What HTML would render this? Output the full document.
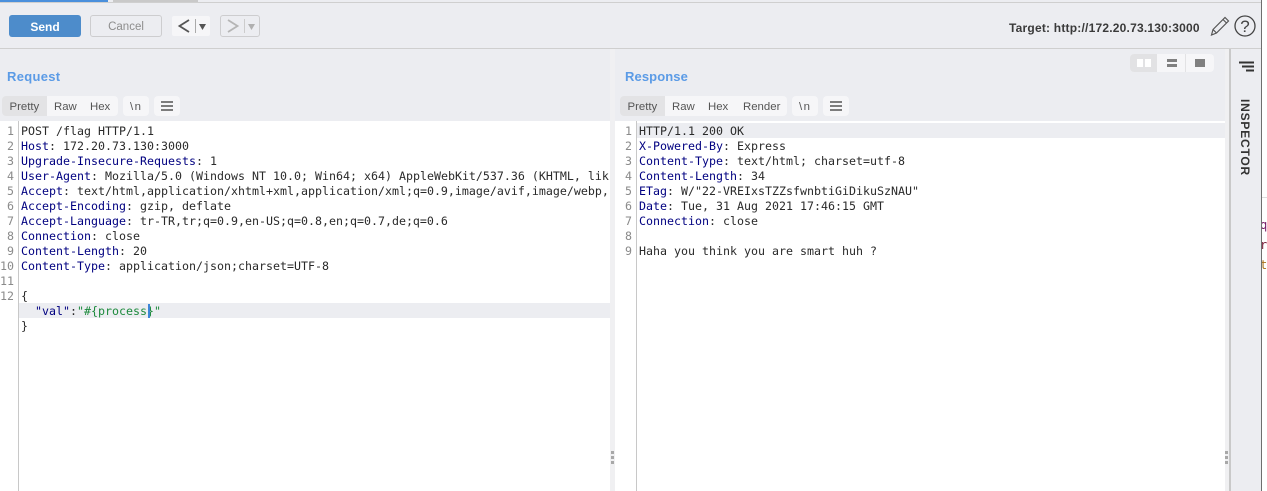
<!DOCTYPE html>
<html><head><meta charset="utf-8"><style>
html,body{margin:0;padding:0;width:1267px;height:491px;overflow:hidden;background:#fff}
*{box-sizing:border-box}
.a{position:absolute}
body{font-family:"Liberation Sans",sans-serif;color:#444}
.ln{position:absolute;font:11.63px/15px "DejaVu Sans Mono","Liberation Mono",monospace;color:#2a2a2a;white-space:pre;height:15px}
.n{position:absolute;font:11.63px/15px "DejaVu Sans Mono","Liberation Mono",monospace;color:#8a8a8a;text-align:right;height:15px}
b{font-weight:normal;color:#000080}
.t{position:absolute;font-size:11.4px;line-height:20px;color:#555;top:97px;white-space:nowrap}
.g{position:absolute;background:#f6f6f8;border-radius:4px;top:96px;height:20px}
</style></head><body>
<div class="a" style="left:0;top:0;width:1261px;height:491px;background:#ecedf1"></div>
<div class="a" style="left:0;top:2px;width:1261px;height:1px;background:#cfcfcf"></div>
<div class="a" style="left:0;top:0;width:108px;height:2px;background:#4a8fdc"></div>
<div class="a" style="left:113px;top:0;width:85px;height:2px;background:#c9c9c9"></div>
<div class="a" style="left:0;top:48px;width:1261px;height:1px;background:#cfcfcf"></div>
<div class="a" style="left:1261px;top:0;width:1px;height:491px;background:#6e6e6e"></div>
<div class="a" style="left:1262px;top:197px;width:5px;height:1px;background:#ddd"></div>

<div class="a" style="left:9px;top:15px;width:72px;height:22px;background:#4d8ccb;border-radius:3px;color:#fff;font-weight:bold;font-size:12px;line-height:24px;text-align:center">Send</div>
<div class="a" style="left:90px;top:15px;width:72px;height:22px;border:1px solid #cdcdcf;border-radius:3px;color:#8d8d8d;font-size:11.5px;line-height:23px;text-align:center">Cancel</div>
<div class="a" style="left:172px;top:16px;width:38px;height:20px;background:#f6f6f8;border-radius:2px"></div>
<svg class="a" style="left:172px;top:16px" width="38" height="20"><path d="M17 4 7.500 10 17 16" fill="none" stroke="#555" stroke-width="1.800"/><path d="M23.500 3v14" stroke="#aaa"/><path d="M27 8h7l-3.500 6z" fill="#555"/></svg>
<div class="a" style="left:220px;top:15px;width:40px;height:22px;border:1px solid #cdcdcf;border-radius:3px"></div>
<svg class="a" style="left:220px;top:16px" width="40" height="20"><path d="M8 4 17.500 10 8 16" fill="none" stroke="#b5b5b5" stroke-width="1.800"/><path d="M24.500 3v14" stroke="#ccc"/><path d="M28 8h7l-3.500 6z" fill="#b0b0b0"/></svg>
<div class="a" style="left:1009px;top:19px;font-size:12px;font-weight:bold;line-height:18px;letter-spacing:.21px;color:#3a3a3a;white-space:nowrap">Target: http://172.20.73.130:3000</div>
<svg class="a" style="left:1208px;top:14px" width="52" height="24"><path d="M3.500 21 5 15.500 17 3.500l3.500 3.500L8.500 19z M5 15.500 8.500 19 M15 5.500 18.500 9" fill="none" stroke="#555" stroke-width="1.200"/><circle cx="37" cy="12" r="10" fill="none" stroke="#444" stroke-width="1.300"/><text x="37" y="18" font-size="17" text-anchor="middle" fill="#444" font-family="Liberation Sans">?</text></svg>

<div class="a" style="left:7px;top:68px;font-size:13px;font-weight:bold;line-height:17px;letter-spacing:.3px;color:#5b9be6">Request</div>
<div class="a" style="left:625px;top:68px;font-size:13px;font-weight:bold;line-height:17px;letter-spacing:.1px;color:#5b9be6">Response</div>

<div class="g" style="left:2px;width:116px"></div>
<div class="a" style="left:2px;top:96px;width:45px;height:20px;background:#e3e3e5;border-radius:4px 0 0 4px"></div>
<div class="t" style="left:9.500px">Pretty</div><div class="t" style="left:54px">Raw</div><div class="t" style="left:90px">Hex</div>
<div class="g" style="left:123px;width:26px"></div><div class="t" style="left:130px;letter-spacing:1.500px">\n</div>
<div class="g" style="left:154px;width:26px"></div>
<svg class="a" style="left:154px;top:96px" width="26" height="20"><path d="M7 6h12M7 10h12M7 14h12" stroke="#333" stroke-width="1.300"/></svg>

<div class="g" style="left:620px;width:167px"></div>
<div class="a" style="left:620px;top:96px;width:45px;height:20px;background:#e3e3e5;border-radius:4px 0 0 4px"></div>
<div class="t" style="left:627.500px">Pretty</div><div class="t" style="left:672px">Raw</div><div class="t" style="left:708px">Hex</div><div class="t" style="left:743px">Render</div>
<div class="g" style="left:792px;width:26px"></div><div class="t" style="left:799px;letter-spacing:1.500px">\n</div>
<div class="g" style="left:823px;width:26px"></div>
<svg class="a" style="left:823px;top:96px" width="26" height="20"><path d="M7 6h12M7 10h12M7 14h12" stroke="#333" stroke-width="1.300"/></svg>

<div class="a" style="left:1130px;top:54px;width:84px;height:18px;background:#f6f6f8;border-radius:4px"></div>
<div class="a" style="left:1130px;top:54px;width:27px;height:18px;background:#e2e2e4;border-radius:4px 0 0 4px"></div>
<div class="a" style="left:1137px;top:59px;width:6px;height:8px;background:#fff"></div>
<div class="a" style="left:1145px;top:59px;width:6px;height:8px;background:#fff"></div>
<div class="a" style="left:1185px;top:54px;width:1px;height:18px;background:#e2e2e4"></div>
<div class="a" style="left:1167px;top:59px;width:10px;height:3px;background:#808080"></div>
<div class="a" style="left:1167px;top:64px;width:10px;height:3px;background:#808080"></div>
<div class="a" style="left:1195px;top:59px;width:10px;height:8px;background:#808080"></div>

<div class="a" style="left:0;top:121px;width:610px;height:370px;background:#fff"></div>
<div class="a" style="left:18px;top:121px;width:1px;height:370px;background:#c8c8c8"></div>
<div class="a" style="left:19px;top:303px;width:591px;height:15px;background:#ecedf1"></div>
<div class="a" style="left:610px;top:49px;width:5px;height:442px;background:#f0f0f2"></div>
<div class="a" style="left:615px;top:121px;width:610px;height:370px;background:#fff"></div>
<div class="a" style="left:636px;top:121px;width:1px;height:370px;background:#c8c8c8"></div>
<div class="a" style="left:637px;top:123px;width:588px;height:15px;background:#ecedf1"></div>
<div class="a" style="left:1225px;top:49px;width:4px;height:442px;background:#f0f0f2"></div>
<div class="a" style="left:1229px;top:49px;width:2px;height:442px;background:#c9c9c9"></div>

<div class="a" style="left:0;top:124px;width:14px;height:195px">
<div class="n" style="top:0;right:0">1</div><div class="n" style="top:15px;right:0">2</div><div class="n" style="top:30px;right:0">3</div><div class="n" style="top:45px;right:0">4</div><div class="n" style="top:60px;right:0">5</div><div class="n" style="top:75px;right:0">6</div><div class="n" style="top:90px;right:0">7</div><div class="n" style="top:105px;right:0">8</div><div class="n" style="top:120px;right:0">9</div><div class="n" style="top:135px;right:0">10</div><div class="n" style="top:150px;right:0">11</div><div class="n" style="top:165px;right:0">12</div>
</div>
<div class="a" style="left:21px;top:124px;width:588px;height:240px;overflow:hidden">
<div class="ln" style="top:0">POST /flag HTTP/1.1</div>
<div class="ln" style="top:15px"><b>Host</b>: 172.20.73.130:3000</div>
<div class="ln" style="top:30px"><b>Upgrade-Insecure-Requests</b>: 1</div>
<div class="ln" style="top:45px"><b>User-Agent</b>: Mozilla/5.0 (Windows NT 10.0; Win64; x64) AppleWebKit/537.36 (KHTML, like Gecko)</div>
<div class="ln" style="top:60px"><b>Accept</b>: text/html,application/xhtml+xml,application/xml;q=0.9,image/avif,image/webp,image/apng</div>
<div class="ln" style="top:75px"><b>Accept-Encoding</b>: gzip, deflate</div>
<div class="ln" style="top:90px"><b>Accept-Language</b>: tr-TR,tr;q=0.9,en-US;q=0.8,en;q=0.7,de;q=0.6</div>
<div class="ln" style="top:105px"><b>Connection</b>: close</div>
<div class="ln" style="top:120px"><b>Content-Length</b>: 20</div>
<div class="ln" style="top:135px"><b>Content-Type</b>: application/json;charset=UTF-8</div>
<div class="ln" style="top:165px">{</div>
<div class="ln" style="top:180px">  <b>"val"</b>:<span style="color:#1c8a3c">"#{process}"</span></div>
<div class="ln" style="top:195px">}</div>
</div>
<div class="a" style="left:148px;top:304px;width:2px;height:14px;background:#3d86d8"></div>

<div class="a" style="left:618px;top:124px;width:14px;height:135px">
<div class="n" style="top:0;right:0">1</div><div class="n" style="top:15px;right:0">2</div><div class="n" style="top:30px;right:0">3</div><div class="n" style="top:45px;right:0">4</div><div class="n" style="top:60px;right:0">5</div><div class="n" style="top:75px;right:0">6</div><div class="n" style="top:90px;right:0">7</div><div class="n" style="top:105px;right:0">8</div><div class="n" style="top:120px;right:0">9</div>
</div>
<div class="a" style="left:639px;top:124px;width:586px;height:240px;overflow:hidden">
<div class="ln" style="top:0">HTTP/1.1 200 OK</div>
<div class="ln" style="top:15px"><b>X-Powered-By</b>: Express</div>
<div class="ln" style="top:30px"><b>Content-Type</b>: text/html; charset=utf-8</div>
<div class="ln" style="top:45px"><b>Content-Length</b>: 34</div>
<div class="ln" style="top:60px"><b>ETag</b>: W/"22-VREIxsTZZsfwnbtiGiDikuSzNAU"</div>
<div class="ln" style="top:75px"><b>Date</b>: Tue, 31 Aug 2021 17:46:15 GMT</div>
<div class="ln" style="top:90px"><b>Connection</b>: close</div>
<div class="ln" style="top:120px">Haha you think you are smart huh ?</div>
</div>

<div class="a" style="left:611px;top:451px;width:3px;height:3px;background:#a8a8a8"></div>
<div class="a" style="left:611px;top:456px;width:3px;height:3px;background:#a8a8a8"></div>
<div class="a" style="left:611px;top:461px;width:3px;height:3px;background:#a8a8a8"></div>
<div class="a" style="left:1225px;top:451px;width:3px;height:3px;background:#a8a8a8"></div>
<div class="a" style="left:1225px;top:456px;width:3px;height:3px;background:#a8a8a8"></div>
<div class="a" style="left:1225px;top:461px;width:3px;height:3px;background:#a8a8a8"></div>

<svg class="a" style="left:1238px;top:60px" width="18" height="14"><path d="M1 2.500h15M4 6.500h12M8 10.500h8" stroke="#333" stroke-width="2"/></svg>
<div class="a" style="left:1238px;top:99px;writing-mode:vertical-rl;font-size:12px;font-weight:bold;line-height:14px;letter-spacing:.8px;color:#333">INSPECTOR</div>

<div class="a" style="left:1262px;top:218px;width:5px;height:60px;overflow:hidden">
<div class="a" style="left:-2px;top:0;font:12px/15px 'DejaVu Sans Mono',monospace;color:#7a1f6a">q</div>
<div class="a" style="left:-2px;top:20px;font:12px/15px 'DejaVu Sans Mono',monospace;color:#7a1f3a">r</div>
<div class="a" style="left:-2px;top:40px;font:12px/15px 'DejaVu Sans Mono',monospace;color:#a8701a">t</div>
</div>
</body></html>
